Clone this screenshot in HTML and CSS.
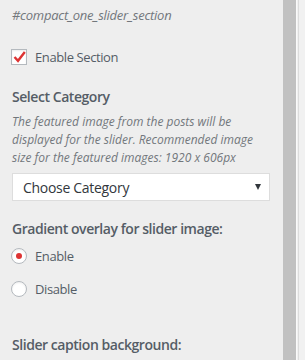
FILE: index.html
```html
<!DOCTYPE html>
<html lang="en">
<head>
    <meta charset="UTF-8">
    <meta name="viewport" content="width=device-width, initial-scale=1.0">
    <title>Slider Section</title>
    <link rel="stylesheet" href="styles.css">
</head>
<body>

<div class="sidebar">
    <div class="panel">
        <p class="section-id">#compact_one_slider_section</p>

        <!-- Enable section -->
        <label class="check-row">
            <span class="checkbox">
                <svg width="13" height="12" viewBox="0 0 13 12"><path d="M1.5 6 L5 9.8 L11.8 1" fill="none" stroke="#dd3333" stroke-width="2.4"/></svg>
            </span>
            Enable Section
        </label>

        <!-- Category -->
        <div class="control">
            <h3 class="control-title">Select Category</h3>
            <p class="description">The featured image from the posts will be displayed for the slider. Recommended image size for the featured images: 1920 x 606px</p>
            <div class="select-box">
                <span>Choose Category</span>
                <span class="arrow"></span>
            </div>
        </div>

        <!-- Gradient overlay -->
        <div class="control">
            <h3 class="control-title">Gradient overlay for slider image:</h3>
            <label class="radio-row"><span class="radio checked"></span>Enable</label>
            <label class="radio-row"><span class="radio"></span>Disable</label>
        </div>

        <h3 class="control-title caption-title">Slider caption background:</h3>
    </div>

    <div class="scrollbar"></div>
    <div class="scroll-edge"></div>
</div>

</body>
</html>
```

FILE: styles.css
```css
body {
    margin: 0;
    background-color: #eeeeee;
    font-family: "Open Sans", "Noto Sans", sans-serif;
    color: #555d66;
    font-size: 13px;
}

.sidebar {
    display: flex;
    height: 360px;
    overflow: hidden;
}

/* Main content column */
.panel {
    flex: 1;
    padding: 0 13px 0 12px;
}

.section-id {
    margin: 5px 0 0;
    font-style: italic;
    color: #72777c;
    line-height: 20px;
    letter-spacing: -0.25px;
}

/* Checkbox row */
.check-row {
    display: flex;
    align-items: center;
    gap: 8px;
    margin: 23px 0 0 -1px;
    line-height: 18px;
    letter-spacing: -0.4px;
}

.checkbox {
    width: 14px;
    height: 14px;
    border: 1px solid #b4b9be;
    background-color: #fff;
    display: flex;
    align-items: center;
    justify-content: center;
    box-shadow: inset 0 1px 2px rgba(0, 0, 0, 0.07);
}

.control-title {
    margin: 0;
    font-size: 14px;
    font-weight: 600;
    line-height: 20px;
    letter-spacing: -0.45px;
}

.control {
    margin-top: 21px;
}

.control + .control {
    margin-top: 18px;
}

.description {
    margin: 6px 0 0;
    font-style: italic;
    font-size: 12px;
    line-height: 18px;
    color: #72777c;
}

/* Select box */
.select-box {
    margin-top: 6px;
    height: 26px;
    background-color: #fff;
    border: 1px solid #dddddd;
    display: flex;
    align-items: center;
    justify-content: space-between;
    padding: 0 8px 0 10px;
    font-size: 14px;
    color: #32373c;
    letter-spacing: -0.3px;
}

.arrow {
    width: 0;
    height: 0;
    border-left: 3.5px solid transparent;
    border-right: 3.5px solid transparent;
    border-top: 6px solid #32373c;
}

/* Radio rows */
.radio-row {
    display: flex;
    align-items: center;
    gap: 8px;
    margin: 4px 0 0 -1px;
    line-height: 26px;
    letter-spacing: -0.4px;
}

.radio-row + .radio-row {
    margin-top: 7px;
}

.radio {
    width: 14px;
    height: 14px;
    border: 1px solid #b4b9be;
    border-radius: 50%;
    background-color: #fff;
    display: flex;
    align-items: center;
    justify-content: center;
    box-shadow: inset 0 1px 2px rgba(0, 0, 0, 0.07);
}

.radio.checked::after {
    content: "";
    width: 6px;
    height: 6px;
    border-radius: 50%;
    background-color: #dd3333;
}

.caption-title {
    margin-top: 33px;
}

/* Fake scrollbar on the right */
.scrollbar {
    width: 13px;
    background-color: #c1c1c1;
}

.scroll-edge {
    width: 9px;
    background-color: #f1f1f1;
    border-left: 1px solid #fafafa;
    box-sizing: border-box;
    background-image: linear-gradient(to right, transparent 1px, #dcdcdc 1px, #dcdcdc 2px, transparent 2px);
}
```
